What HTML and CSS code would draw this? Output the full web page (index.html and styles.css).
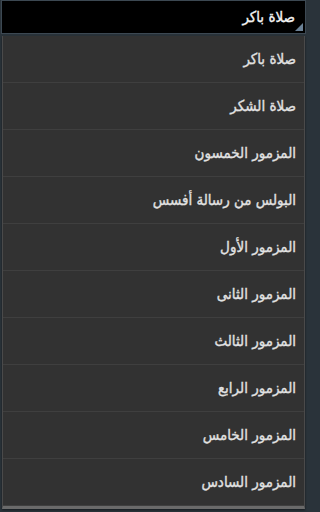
FILE: index.html
```html
<!DOCTYPE html>
<html lang="ar">
<head>
<meta charset="utf-8">
<link rel="stylesheet" href="styles.css">
</head>
<body>
<div class="screen">
  <div class="spinner">
    <span class="spinner-text">صلاة باكر</span>
    <span class="corner"></span>
  </div>
  <ul class="list">
    <li>صلاة باكر</li>
    <li>صلاة الشكر</li>
    <li>المزمور الخمسون</li>
    <li>البولس من رسالة أفسس</li>
    <li>المزمور الأول</li>
    <li>المزمور الثانى</li>
    <li>المزمور الثالث</li>
    <li>المزمور الرابع</li>
    <li>المزمور الخامس</li>
    <li>المزمور السادس</li>
  </ul>
</div>
</body>
</html>
```
FILE: styles.css
```css
html, body {
  margin: 0;
  padding: 0;
  background: #2a333a;
}
.screen {
  width: 307px;
  height: 512px;
  overflow: hidden;
  display: flex;
  flex-direction: column;
  direction: rtl;
  font-family: "DejaVu Sans Condensed", "DejaVu Sans", sans-serif;
  background: #2a333a;
}
.spinner {
  position: relative;
  height: 34px;
  margin: 0 1px 0 1px;
  background: #000;
  border: 1px solid #3c4852;
  display: flex;
  align-items: center;
  padding-right: 10px;
  box-sizing: border-box;
}
.spinner-text {
  color: #f4f4f4;
  font-size: 15px;
  -webkit-text-stroke: 0.35px #f4f4f4;
  margin-top: -1px;
}
.corner {
  position: absolute;
  right: 2px;
  bottom: 2px;
  width: 0;
  height: 0;
  border-left: 8px solid transparent;
  border-bottom: 8px solid #6b8196;
}
.list {
  list-style: none;
  margin: 2px 2px 0 2px;
  padding: 0;
  background: #323232;
  border-left: 1px solid #4a4a4a;
  border-right: 1px solid #4a4a4a;
  border-bottom: 3px solid #6a6a6a;
  box-shadow: 0 1px 2px rgba(0,0,0,0.5);
}
.list li {
  height: 46px;
  border-bottom: 1px solid #3f3f3f;
  display: flex;
  align-items: center;
  padding-right: 8px;
  color: #e2e2e2;
  font-size: 15px;
  -webkit-text-stroke: 0.35px #e2e2e2;
}
```
